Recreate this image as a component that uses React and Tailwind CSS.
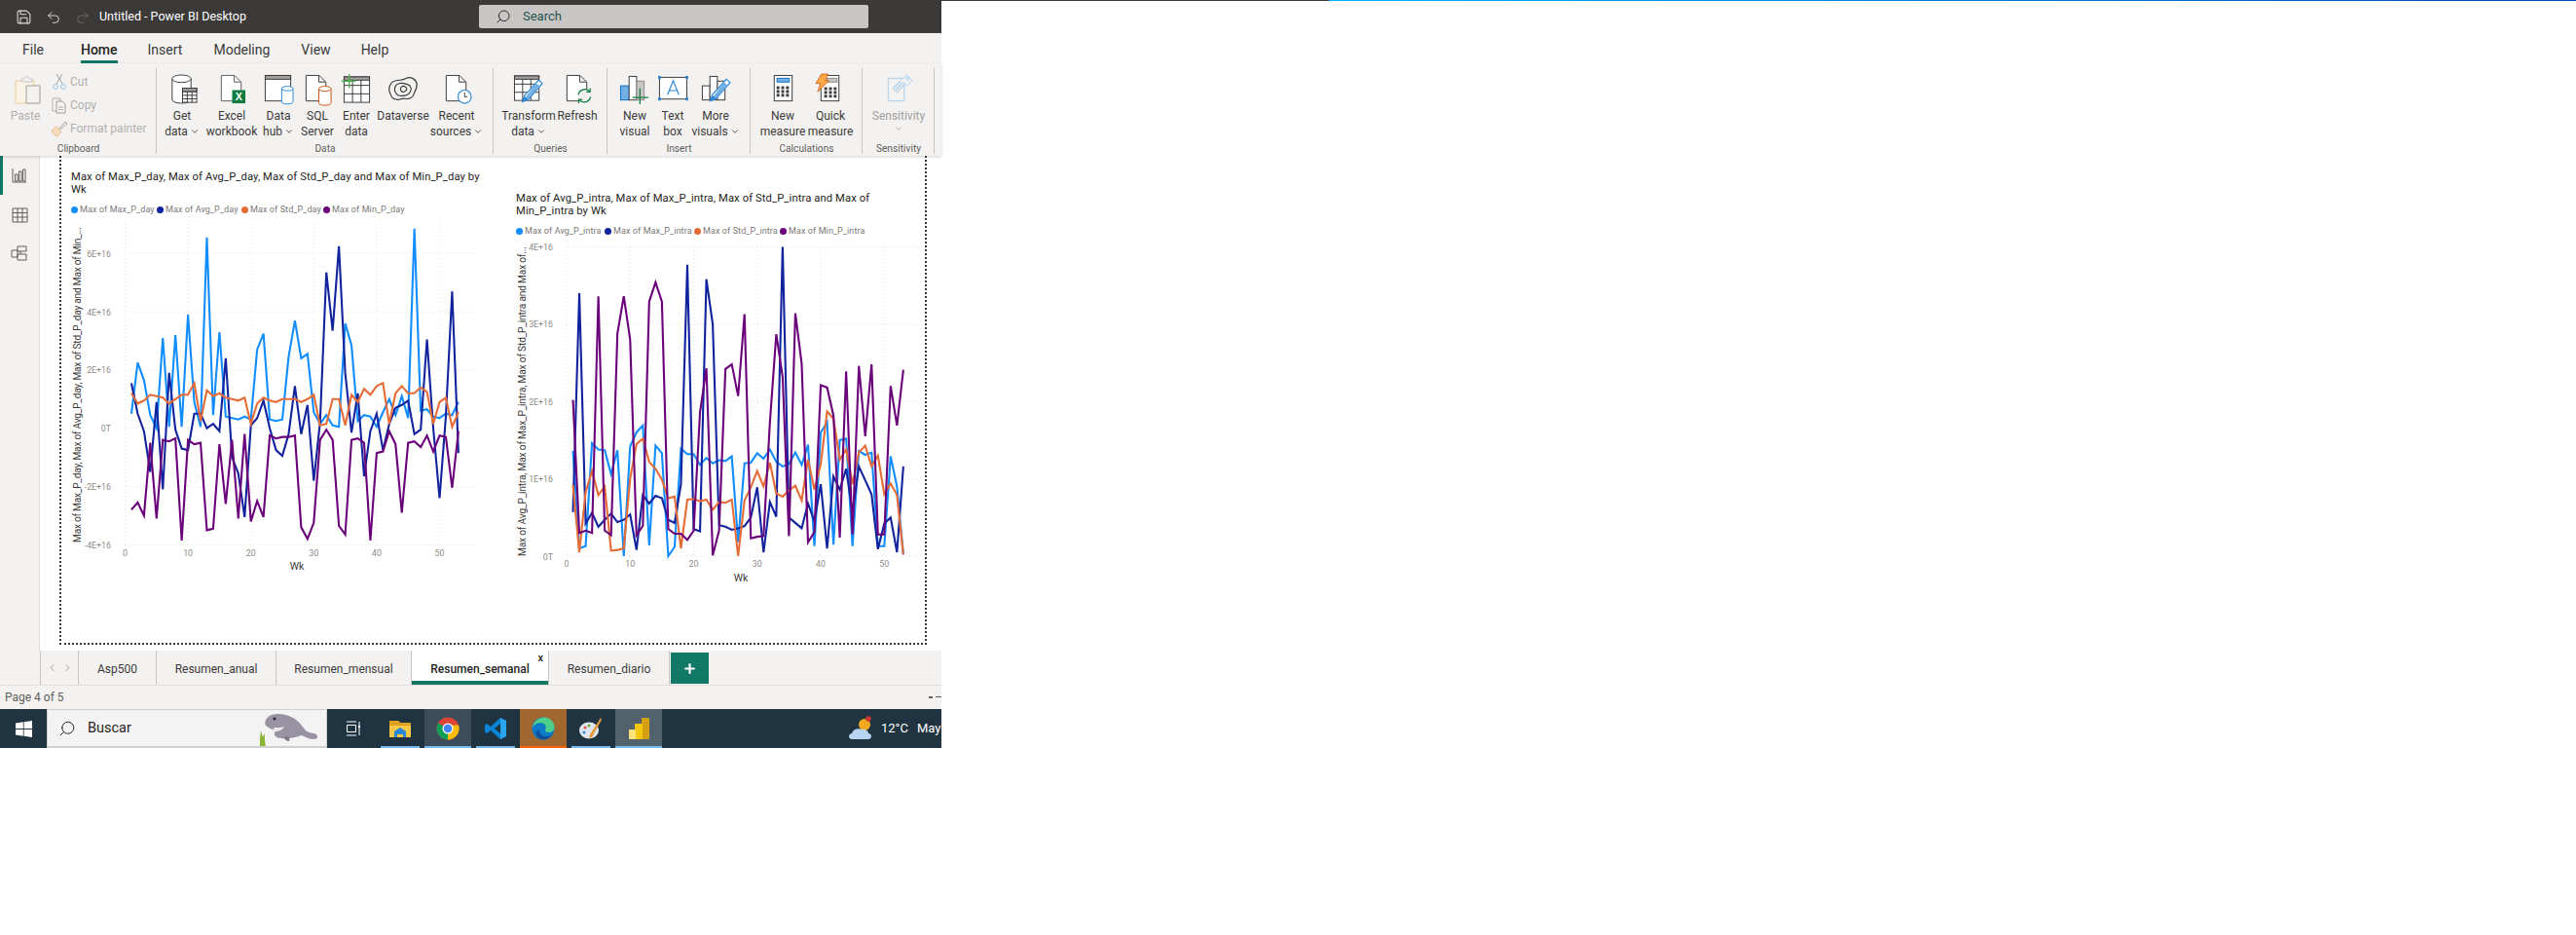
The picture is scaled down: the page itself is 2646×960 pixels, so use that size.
import React from 'react'
import { ChevronDown, ChevronLeft, ChevronRight, Plus, Redo2, Save, Search, Undo2 } from 'lucide-react'

const BLUE = '#118dff'
const NAVY = '#12239e'
const ORANGE = '#e66c37'
const PURPLE = '#6b007b'

// values read off the chart, in units of 1E+16, week 1 to 53
const dayMax = [.5,2.25,1.65,.45,0,3.1,.05,3.2,.05,3.9,.9,.05,6.55,.45,3.3,.4,.35,.3,.4,.3,2.7,3.25,.3,.25,.3,2.45,3.7,2.4,2.55,.55,.15,.45,.1,.05,3.6,2.85,.25,.45,.4,.05,.55,1,.45,1.1,.35,6.85,.6,.65,.4,.35,.5,.45,.9]
const dayAvg = [1.55,.5,-.1,-1.5,.9,-2.1,1.9,-.05,-.7,-.75,.5,.5,0,.15,-.1,2.4,-1,-1.55,-3.05,.1,.35,.95,0,-.75,-.95,-.2,1.45,-.2,.8,-1.8,.2,5.35,3.35,6.25,1.9,-.15,1.2,-1.65,-.1,.5,-.75,.15,.7,.8,.95,-.2,-.05,3.05,0,-2.4,.4,4.7,-.85]
const dayStd = [1.2,.85,.95,1.15,1.1,1.05,.85,1,1.15,1.15,1.55,.25,1.3,1.1,1.2,1.05,1,.95,1.05,.15,.85,1.05,.95,.9,1,1,1,.9,1,1.15,.1,.15,1,1,.1,1.15,.9,1.35,1.15,1.45,1.55,.15,1.2,1.45,1.2,1.2,1.4,1.25,.15,.9,1.05,.05,.55]
const dayMin = [-2.8,-2.55,-3,-.5,-3.1,-.4,-.45,-.35,-3.85,-.4,-.55,-.5,-3.5,-3.45,-.55,-2.6,-.4,-3.1,-.2,-3.2,-2.5,-3.05,-.25,-.35,-.3,-.3,-.25,-3.4,-3.8,-3.25,-.4,-.05,-.4,-3.35,-3.65,-.4,-.35,-.5,-3.85,-.85,-.8,-.1,-.55,-2.9,-.5,-.45,-.65,-.25,-.8,-.25,-.3,-2.05,-.1]

const intraAvg = [1.36,.1,.13,1.46,1.38,1.37,1.06,1.37,0,1.42,1.6,1.69,.14,1.43,1.33,0,.12,1.39,1.32,1.32,1.18,1.27,1.2,1.24,1.23,1.29,.18,1.2,1.21,1.33,1.26,1.38,1.22,1.16,1.19,1.34,1.18,1.44,.13,1.6,1.73,.15,1.5,1.52,.13,1.36,1.31,1.34,.13,.13,1.29,.9,.02]
const intraMax = [.57,3.4,.42,.56,.38,.47,.55,.44,.47,.54,.08,.79,.68,.78,.75,.47,.43,.93,3.77,.35,.32,3.58,3,.4,.38,.34,.36,.39,.5,.89,.05,.7,.51,4,.5,.43,.36,.68,.45,.93,.1,1.03,.86,1.13,.56,1.16,.98,.8,.09,.42,.5,.05,1.16]
const intraStd = [.92,.05,.83,1.1,.79,.9,.07,.08,.1,1,1.45,1.52,1.22,1.13,.99,.75,.77,.1,.73,.74,.71,.73,.6,.7,.69,.73,0,.72,.89,1.1,.9,1.21,.81,.77,.85,.91,.72,1.25,.86,1.19,1.87,1.78,1.25,1.38,.93,1.34,1.43,1.16,1.3,.8,.94,.79,.02]
const intraMin = [2.02,.3,.33,.3,3.36,.33,.27,2.88,3.36,2.8,.27,.39,3.29,3.54,3.29,.35,.29,.29,.21,.33,1.86,2.43,.01,.33,2.42,2.48,2.07,3.13,.23,.25,.26,1.73,2.87,2.32,.26,3.14,2.49,.18,.31,2.21,2.18,1.82,.24,2.39,.28,2.46,1.55,2.48,.28,.28,2.2,1.69,2.41]

const fmtTick = (v) => (v === 0 ? '0T' : `${v}E+16`)

// svg viewBox uses page pixels so the numbers match the reference directly
function LinePlot({ box, x0, xStep, yZero, yUnit, ticks, right, top, axisX, labelX, yTitle, yTitleLen, yTitleStart, wkX, wkY, tickY, series }) {
  const px = (w) => x0 + w * xStep
  const py = (v) => yZero - v * yUnit
  return (
    <svg width={box[2]} height={box[3]} viewBox={box.join(' ')} className="mt-[6px] block">
      {ticks.map((t) => (
        <g key={t}>
          <line x1={x0} x2={right} y1={py(t)} y2={py(t)} stroke="#dedede" strokeDasharray="1 3" />
          <text x={labelX} y={py(t) + 3.5} fontSize="8.8" textAnchor="end" fill="#8d8b89">{fmtTick(t)}</text>
        </g>
      ))}
      {[0, 10, 20, 30, 40, 50].map((w) => (
        <g key={w}>
          <line x1={px(w)} x2={px(w)} y1={top} y2={py(ticks[0])} stroke="#dedede" strokeDasharray="1 3" />
          <text x={px(w)} y={tickY} fontSize="8.8" textAnchor="middle" fill="#8d8b89">{w}</text>
        </g>
      ))}
      <text x={axisX} y={yTitleStart} fontSize="10.2" fill="#3b3a39" textLength={yTitleLen} transform={`rotate(-90 ${axisX} ${yTitleStart})`}>{yTitle}</text>
      <text x={wkX} y={wkY} fontSize="10.5" textAnchor="middle" fill="#3b3a39">Wk</text>
      {series.map((s) => (
        <polyline
          key={s.color}
          points={s.data.map((v, i) => `${px(i + 1)},${py(v)}`).join(' ')}
          fill="none"
          stroke={s.color}
          strokeWidth="2.1"
          strokeLinejoin="miter"
        />
      ))}
    </svg>
  )
}

function LegendItem({ color, label, width }) {
  return (
    <div className="flex shrink-0 items-center gap-[2px]" style={{ width }}>
      <span className="h-[7px] w-[7px] shrink-0 rounded-full" style={{ backgroundColor: color }} />
      <span className="whitespace-nowrap text-[9px] leading-none tracking-[0.1px] text-[#7b7977]">{label}</span>
    </div>
  )
}

/* ---------- ribbon icons ---------- */
const ink = '#3b3a39'

function Cyl({ x, y, w, h, stroke = ink, fill = '#fff' }) {
  const ry = w * 0.2
  return (
    <g fill={fill} stroke={stroke} strokeWidth="1">
      <path d={`M${x} ${y + ry}v${h}c0 ${ry * 1.3} ${w} ${ry * 1.3} ${w} 0v-${h}`} />
      <ellipse cx={x + w / 2} cy={y + ry} rx={w / 2} ry={ry} />
    </g>
  )
}

function Page({ x = 5, y = 1, w = 20, h = 27, stroke = ink }) {
  return <path d={`M${x + .5} ${y + .5}h${w - 7}l7 7v${h - 7}h-${w}z M${x + w - 7} ${y + .5}v7h7`} fill="#fff" stroke={stroke} />
}

function Grid({ x, y, w, h, cols, rows, stroke = ink, head }) {
  const lines = []
  for (let i = 1; i < cols; i++) lines.push(<line key={`c${i}`} x1={x + (w * i) / cols} x2={x + (w * i) / cols} y1={y} y2={y + h} />)
  for (let i = 1; i < rows; i++) lines.push(<line key={`r${i}`} x1={x} x2={x + w} y1={y + (h * i) / rows} y2={y + (h * i) / rows} />)
  return (
    <g stroke={stroke} fill="none">
      <rect x={x} y={y} width={w} height={h} fill="#fff" />
      {lines}
      {head && <rect x={x} y={y} width={w} height="3.5" fill="#a19f9d" stroke={stroke} />}
    </g>
  )
}

function Clock({ cx, cy, r }) {
  return (
    <g>
      <circle cx={cx} cy={cy} r={r} fill="#fff" stroke="#2b88d8" strokeWidth="1.2" />
      <path d={`M${cx} ${cy - r + 2.5}v${r - 2.5}h3`} fill="none" stroke={ink} />
    </g>
  )
}

function Pencil({ dx = 0, dy = 0 }) {
  return (
    <g transform={`translate(${dx} ${dy})`}>
      <path d="M24 1.5l4 3.5L13 22l-6 2.5L9 18z" fill="#fff" stroke="#2b88d8" strokeWidth="1.2" />
      <path d="M21.5 4.5l4 3.5L12 22l-2-2z" fill="#71afe5" />
      <path d="M7 24.5l2-6 4 3.5z" fill="#2b88d8" />
    </g>
  )
}

const icons = {
  getData: (
    <>
      <Cyl x={6} y={1} w={20} h={22} />
      <Grid x={17} y={15} w={15} h={15} cols={3} rows={4} head />
    </>
  ),
  excel: (
    <>
      <Page x={5} y={1} w={21} h={27} stroke="#605e5c" />
      <rect x={17} y={17} width={14} height={14} fill="#107c41" />
      <text x={24} y={28} fontSize="11" fontWeight="700" textAnchor="middle" fill="#fff" fontFamily="Liberation Sans, sans-serif">X</text>
    </>
  ),
  dataHub: (
    <>
      <rect x={2.5} y={1.5} width={27} height={27} fill="#fff" stroke={ink} />
      <rect x={2.5} y={1.5} width={27} height={4} fill="#a19f9d" stroke={ink} />
      <Cyl x={20} y={13} w={12} h={14} stroke="#2b88d8" />
    </>
  ),
  sql: (
    <>
      <Page x={4} y={1} w={21} h={27} />
      <Cyl x={18} y={13} w={13} h={15} stroke="#ca5010" />
    </>
  ),
  enter: (
    <>
      <Grid x={3.5} y={3} w={27} h={27} cols={3} rows={3} head />
      <path d="M9 0v15M1 7.500h15" stroke="#4caf50" strokeWidth="1.4" />
    </>
  ),
  dataverse: (
    <g fill="none" stroke={ink} strokeWidth="1.2">
      <path d="M3 21c-3-6 0-13 6-14 4-1 7 0 10-2 5-3 11 0 12 5 1 5-2 8-3 11-1 4-5 6-9 5-4-1-6 2-9 1-4 0-6-3-7-6z" />
      <path d="M9 20c-3-4-1-9 3-10 3-1 6 0 9 1 4 1 5 5 3 8-2 4-6 4-9 4-2 0-5-1-6-3z" />
      <path d="M14 17c-1-3 2-5 4-4 3 1 3 4 1 5-2 2-4 1-5-1z" />
    </g>
  ),
  recent: (
    <>
      <Page x={5} y={1} w={21} h={27} />
      <Clock cx={25} cy={24} r={7} />
    </>
  ),
  transform: (
    <>
      <Grid x={1.500} y={2} w={26} h={26} cols={3} rows={3} head />
      <Pencil dx={3} dy={5} />
    </>
  ),
  refresh: (
    <>
      <Page x={5} y={1} w={21} h={27} />
      <circle cx={24} cy={23} r={7.5} fill="#f3f2f1" />
      <path d="M17.500 22a7 7 0 0 1 12-3.500M30.500 24a7 7 0 0 1-12 3.500" fill="none" stroke="#107c41" strokeWidth="1.3" />
      <path d="M30 15v4h-4M18 31v-4h4" fill="none" stroke="#107c41" strokeWidth="1.3" />
    </>
  ),
  newVisual: (
    <>
      <rect x={1.500} y={12.500} width={9} height={15} fill="#71afe5" stroke="#0f6cbd" />
      <rect x={10.500} y={2.500} width={8} height={25} fill="#fff" stroke={ink} />
      <rect x={18.500} y={7.500} width={8} height={20} fill="#c8c6c4" stroke="#8a8886" />
      <path d="M22 15v17M14 25h17" stroke="#107c41" strokeWidth="1.300" />
    </>
  ),
  textBox: (
    <>
      <rect x={2.500} y={3.500} width={29} height={23} fill="#fff" stroke={ink} />
      {[[2.500, 3.500], [31.500, 3.500], [2.500, 26.500], [31.500, 26.500]].map(([x, y]) => (
        <rect key={`${x}${y}`} x={x - 1.500} y={y - 1.500} width={3} height={3} fill="#2b88d8" />
      ))}
      <path d="M11 22l6-15 6 15M13 17.500h8" fill="none" stroke="#2b88d8" strokeWidth="1.200" />
    </>
  ),
  moreVisuals: (
    <>
      <rect x={2.500} y={12.500} width={8} height={15} fill="#fff" stroke={ink} />
      <rect x={10.500} y={2.500} width={8} height={25} fill="#fff" stroke={ink} />
      <rect x={18.500} y={7.500} width={8} height={20} fill="#fff" stroke={ink} />
      <Pencil dx={4} dy={4} />
    </>
  ),
  measure: (
    <>
      <rect x={7.500} y={1.500} width={19} height={27} fill="#fff" stroke={ink} />
      <rect x={10.500} y={4.500} width={13} height={4} fill="#71afe5" stroke="#0f6cbd" />
      {[12, 16, 20].flatMap((y) => [10, 15, 20].map((x) => <rect key={`${x}${y}`} x={x} y={y + 1} width={3} height={3} fill={ink} />))}
    </>
  ),
  quick: (
    <>
      <rect x={6.500} y={1.500} width={19} height={27} fill="#fff" stroke={ink} />
      <rect x={12.500} y={4.500} width={11} height={4} fill="#c8c6c4" stroke="#8a8886" />
      {[13, 17, 21].flatMap((y) => [10, 15, 20].map((x) => <rect key={`${x}${y}`} x={x} y={y + 1} width={3} height={3} fill={ink} />))}
      <path d="M7 0h7l-3 7h4L3 19l3-9H1z" fill="#ffaa44" stroke="#ca5010" strokeWidth=".8" />
    </>
  ),
  sensitivity: (
    <g stroke="#a9cfee" fill="none">
      <path d="M5.500 4.500h17v24h-17z" fill="#f3f2f1" />
      <path d="M10 16l9-9M12 18l9-9M14 20l9-9" strokeWidth="1.300" />
      <path d="M20 6l5-5 6 6-5 5-2-1" fill="#f3f2f1" />
      <circle cx={26} cy={5} r={1.500} />
    </g>
  ),
}

function RibbonIcon({ name }) {
  return (
    <svg width="32" height="32" viewBox="0 0 33 33" className="shrink-0 overflow-visible">
      {icons[name]}
    </svg>
  )
}

function RibbonBtn({ icon, lines, width, caret, muted }) {
  return (
    <div className={`flex shrink-0 flex-col items-center pt-[11px] ${muted ? 'text-[#a19f9d]' : 'text-[#3b3a39]'}`} style={{ width }}>
      <RibbonIcon name={icon} />
      <div className="mt-[3px] flex flex-col items-center whitespace-nowrap text-[12px] leading-[16px]">
        <span>{lines[0]}</span>
        <span className="flex items-center gap-[2px]">
          {lines[1]}
          {caret && <ChevronDown size={10} strokeWidth={2} />}
        </span>
      </div>
    </div>
  )
}

function RibbonGroup({ label, width, pad = 0, children }) {
  return (
    <div className="relative flex h-full shrink-0 flex-col" style={{ width }}>
      <div className="flex h-[82px]" style={{ paddingLeft: pad }}>{children}</div>
      <div className="text-center text-[10.2px] leading-[14px] text-[#605e5c]">{label}</div>
      <div className="absolute right-0 top-[5px] h-[88px] w-px bg-[#c8c6c4]" />
    </div>
  )
}

function SmallAction({ icon, label }) {
  return (
    <div className="flex h-[24px] items-center gap-[2px] whitespace-nowrap text-[12px] text-[#b3b0ad]">
      <svg width="18" height="18" viewBox="0 0 18 18" className="shrink-0" fill="none">{icon}</svg>
      {label}
    </div>
  )
}

function RailIcon({ children }) {
  return (
    <div className="flex h-[40px] items-center justify-center">
      <svg width="20" height="20" viewBox="0 0 20 20" fill="none" stroke="#605e5c">{children}</svg>
    </div>
  )
}

function SheetTab({ label, width, active }) {
  return (
    <div className={`relative flex h-full shrink-0 items-center justify-center border-r border-[#c8c6c4] pt-[2px] text-[12px] ${active ? 'bg-white font-medium text-[#252423]' : 'text-[#3b3a39]'}`} style={{ width }}>
      {label}
      {active && (
        <>
          <span className="absolute right-[5px] top-[2px] text-[11px] leading-[12px]">x</span>
          <span className="absolute inset-x-0 bottom-0 h-[4px] bg-[#117865]" />
        </>
      )}
    </div>
  )
}

function TaskTile({ children, active, bar = '#76b9ed', bg }) {
  return (
    <div className="relative flex h-full w-[48px] shrink-0 items-center justify-center" style={{ backgroundColor: bg }}>
      <svg width="24" height="24" viewBox="0 0 24 24">{children}</svg>
      {bar && <span className={`absolute bottom-0 h-[2px] ${active ? 'inset-x-0' : 'inset-x-[4px]'}`} style={{ backgroundColor: bar }} />}
    </div>
  )
}

export default function App() {
  return (
    <div className="h-[960px] w-[2646px] overflow-hidden bg-white" style={{ fontFamily: 'Roboto, sans-serif' }}>
      {/* hairline across the top of the screen */}
      <div className="flex h-px">
        <div className="w-[1365px] bg-[#3b3a39]" />
        <div className="flex-1 bg-gradient-to-r from-[#00b4ff] to-[#0047b0]" />
      </div>

      <div className="flex h-[767px] w-[967px] flex-col bg-[#f3f2f1]">
        {/* title bar */}
        <div className="relative flex h-[33px] shrink-0 items-center bg-[#3b3a39] text-white">
          <Save size={17} strokeWidth={1.5} className="ml-[16px] text-[#e1dfdd]" />
          <Undo2 size={16} strokeWidth={1.4} className="ml-[14px] text-[#e1dfdd]" />
          <Redo2 size={16} strokeWidth={1.4} className="ml-[14px] text-[#6f6d6b]" />
          <span className="ml-[9px] whitespace-nowrap text-[12.5px]">Untitled - Power BI Desktop</span>
          <div className="absolute left-[492px] top-[4px] flex h-[24px] w-[400px] items-center rounded-[2px] bg-[#c8c6c4] pl-[17px] text-[13px] text-[#24544d]">
            <Search size={16} strokeWidth={1.4} className="-scale-x-100 text-[#252423]" />
            <span className="ml-[12px]">Search</span>
          </div>
        </div>

        {/* ribbon tabs */}
        <div className="flex h-[31px] shrink-0 text-[14px] text-[#3b3a39]">
          <span className="ml-[23px] mt-[7px]">File</span>
          <div className="relative ml-[38px] h-full pt-[7px] font-medium text-[#252423]">
            Home
            <span className="absolute inset-x-0 bottom-0 h-[3px] bg-[#117865]" />
          </div>
          <span className="ml-[31px] mt-[7px]">Insert</span>
          <span className="ml-[32px] mt-[7px]">Modeling</span>
          <span className="ml-[32px] mt-[7px]">View</span>
          <span className="ml-[31px] mt-[7px]">Help</span>
        </div>

        {/* ribbon */}
        <div className="relative z-10 flex h-[95px] shrink-0 shadow-[0_1px_3px_rgba(0,0,0,0.18)]">
          <RibbonGroup label="Clipboard" width={161}>
            <div className="flex w-[52px] flex-col items-center pt-[11px] text-[#b3b0ad]">
              <svg width="32" height="32" viewBox="0 0 32 32" fill="none" className="ml-[8px] shrink-0">
                <path d="M2 7h19v23H2z" stroke="#f0d6b2" fill="#fbf3e6" strokeWidth="1.400" />
                <path d="M8 7V5h3c0-3 5-3 5 0h3v3H8z" fill="#f3f2f1" stroke="#c8c6c4" />
                <path d="M13 12h14v18H13z" fill="#f3f2f1" stroke="#a19f9d" />
              </svg>
              <span className="mt-[3px] text-[12px] leading-[16px]">Paste</span>
            </div>
            <div className="flex flex-col pt-[7px]">
              <SmallAction label="Cut" icon={<><path d="M6 1l6 10M12 1L6 11" stroke="#a19f9d" /><circle cx="5" cy="14" r="2.400" stroke="#9ac6ea" /><circle cx="13" cy="14" r="2.400" stroke="#9ac6ea" /></>} />
              <SmallAction label="Copy" icon={<><path d="M2 2h8v3M2 2v13h4" stroke="#b3b0ad" /><path d="M6 5h6l3 3v9H6z" stroke="#a19f9d" /><path d="M8 11h5M8 13.500h5" stroke="#b3b0ad" /></>} />
              <SmallAction label="Format painter" icon={<><path d="M1 11l5-4 5 5-4 5c-3-1-5-3-6-6z" fill="#f5dcbc" stroke="#eac08e" /><path d="M9 9l6-7 2 2-7 6" fill="#f3f2f1" stroke="#a19f9d" /></>} />
            </div>
          </RibbonGroup>
          <RibbonGroup label="Data" width={346}>
            <RibbonBtn icon="getData" lines={['Get', 'data']} width={52} caret />
            <RibbonBtn icon="excel" lines={['Excel', 'workbook']} width={50} />
            <RibbonBtn icon="dataHub" lines={['Data', 'hub']} width={46} caret />
            <RibbonBtn icon="sql" lines={['SQL', 'Server']} width={34} />
            <RibbonBtn icon="enter" lines={['Enter', 'data']} width={46} />
            <RibbonBtn icon="dataverse" lines={['Dataverse', '\u00a0']} width={50} />
            <RibbonBtn icon="recent" lines={['Recent', 'sources']} width={60} caret />
          </RibbonGroup>
          <RibbonGroup label="Queries" width={117} pad={10}>
            <RibbonBtn icon="transform" lines={['Transform', 'data']} width={52} caret />
            <RibbonBtn icon="refresh" lines={['Refresh', '\u00a0']} width={48} />
          </RibbonGroup>
          <RibbonGroup label="Insert" width={147} pad={8}>
            <RibbonBtn icon="newVisual" lines={['New', 'visual']} width={40} />
            <RibbonBtn icon="textBox" lines={['Text', 'box']} width={38} />
            <RibbonBtn icon="moreVisuals" lines={['More', 'visuals']} width={50} caret />
          </RibbonGroup>
          <RibbonGroup label="Calculations" width={115} pad={8}>
            <RibbonBtn icon="measure" lines={['New', 'measure']} width={50} />
            <RibbonBtn icon="quick" lines={['Quick', 'measure']} width={48} />
          </RibbonGroup>
          <RibbonGroup label="Sensitivity" width={74} pad={7}>
            <RibbonBtn icon="sensitivity" lines={['Sensitivity', '']} width={60} caret muted />
          </RibbonGroup>
        </div>

        {/* main area */}
        <div className="flex h-[508px] shrink-0">
          <div className="flex w-[41px] shrink-0 flex-col border-r border-[#e1dfdd]">
            <div className="border-l-[3px] border-[#117865] pr-[3px]">
              <RailIcon><path d="M3 3v14h14" /><path d="M5.500 9h2.500v7H5.500zM9.500 6h2.500v10H9.500zM13.500 4h2.500v12h-2.500z" /></RailIcon>
            </div>
            <RailIcon><path d="M3 4h15v14H3zM3 8.500h15M3 13h15M8 4v14M13 4v14" /></RailIcon>
            <RailIcon><path d="M8 3h9v5H8zM11 8v3M8 11h9v6H8zM2 7h6v7H2z" /></RailIcon>
          </div>
          <div className="flex-1 bg-white pl-[20px]">
            <div className="flex h-[502px] w-[891px] items-start border-2 border-t-0 border-dotted border-[#3b3a39] pl-[10px]">
              {/* left visual */}
              <div className="mt-[15px] w-[457px] shrink-0">
                <div className="w-[425px] text-[11.2px] leading-[13px] tracking-[0.12px] text-[#252423]">
                  Max of Max_P_day, Max of Avg_P_day, Max of Std_P_day and Max of Min_P_day by Wk
                </div>
                <div className="mt-[9px] flex h-[10px]">
                  <LegendItem color={BLUE} label="Max of Max_P_day" width={88} />
                  <LegendItem color={NAVY} label="Max of Avg_P_day" width={87} />
                  <LegendItem color={ORANGE} label="Max of Std_P_day" width={84} />
                  <LegendItem color={PURPLE} label="Max of Min_P_day" width={90} />
                </div>
                <LinePlot
                  box={[73, 226, 425, 364]}
                  x0={128.5}
                  xStep={6.46}
                  yZero={439.7}
                  yUnit={29.9}
                  ticks={[-4, -2, 0, 2, 4, 6]}
                  right={489}
                  top={230}
                  axisX={83}
                  labelX={114}
                  yTitle="Max of Max_P_day, Max of Avg_P_day, Max of Std_P_day and Max of Min_..."
                  yTitleLen={324}
                  yTitleStart={557}
                  wkX={305}
                  wkY={585}
                  tickY={571}
                  series={[
                    { color: BLUE, data: dayMax },
                    { color: NAVY, data: dayAvg },
                    { color: ORANGE, data: dayStd },
                    { color: PURPLE, data: dayMin },
                  ]}
                />
              </div>
              {/* right visual */}
              <div className="mt-[37px] w-[420px] shrink-0">
                <div className="w-[400px] text-[11.2px] leading-[13px] tracking-[0.12px] text-[#252423]">
                  Max of Avg_P_intra, Max of Max_P_intra, Max of Std_P_intra and Max of Min_P_intra by Wk
                </div>
                <div className="mt-[9px] flex h-[10px]">
                  <LegendItem color={BLUE} label="Max of Avg_P_intra" width={91} />
                  <LegendItem color={NAVY} label="Max of Max_P_intra" width={92} />
                  <LegendItem color={ORANGE} label="Max of Std_P_intra" width={88} />
                  <LegendItem color={PURPLE} label="Max of Min_P_intra" width={90} />
                </div>
                <LinePlot
                  box={[530, 248, 418, 356]}
                  x0={582}
                  xStep={6.526}
                  yZero={571}
                  yUnit={79.4}
                  ticks={[0, 1, 2, 3, 4]}
                  right={947}
                  top={253}
                  axisX={540}
                  labelX={568}
                  yTitle="Max of Avg_P_intra, Max of Max_P_intra, Max of Std_P_intra and Max of..."
                  yTitleLen={318}
                  yTitleStart={571}
                  wkX={761}
                  wkY={597}
                  tickY={582}
                  series={[
                    { color: BLUE, data: intraAvg },
                    { color: NAVY, data: intraMax },
                    { color: ORANGE, data: intraStd },
                    { color: PURPLE, data: intraMin },
                  ]}
                />
              </div>
            </div>
          </div>
        </div>

        {/* page tabs */}
        <div className="flex h-[35px] shrink-0 pl-[41px]">
          <div className="flex h-full w-[40px] shrink-0 items-center justify-center gap-[5px] border-x border-[#c8c6c4] text-[#c8c6c4]">
            <ChevronLeft size={11} strokeWidth={3} />
            <ChevronRight size={11} strokeWidth={3} />
          </div>
          <SheetTab label="Asp500" width={80} />
          <SheetTab label="Resumen_anual" width={123} />
          <SheetTab label="Resumen_mensual" width={139} />
          <SheetTab label="Resumen_semanal" width={141} active />
          <SheetTab label="Resumen_diario" width={124} />
          <div className="ml-px mt-[2px] flex h-[32px] w-[39px] shrink-0 items-center justify-center bg-[#117865] text-white">
            <Plus size={15} strokeWidth={3.5} />
          </div>
        </div>

        {/* status bar */}
        <div className="flex h-[25px] shrink-0 items-center justify-between border-t border-[#e1dfdd] pl-[5px] text-[12px] text-[#605e5c]">
          <span>Page 4 of 5</span>
          <span className="flex gap-[3px] pr-0">
            <span className="h-[2px] w-[4px] bg-[#605e5c]" />
            <span className="h-px w-[6px] bg-[#605e5c]" />
          </span>
        </div>

        {/* windows taskbar */}
        <div className="flex h-[40px] shrink-0 items-center overflow-hidden bg-[#1f3341] text-white">
          <div className="flex h-full w-[48px] shrink-0 items-center justify-center">
            <svg width="17" height="17" viewBox="0 0 17 17" fill="#fff">
              <path d="M0 2.400L7.800 1.300v6.800H0zM8.600 1.200L17 0v8.100H8.600zM0 8.900h7.800v6.800L0 14.600zM8.600 8.900H17V17L8.600 15.800z" />
            </svg>
          </div>
          <div className="relative flex h-full w-[288px] shrink-0 items-center overflow-hidden border border-b-2 border-[#cfcfcf] bg-[#f3f3f3] pl-[11px] text-[#252423]">
            <Search size={18} strokeWidth={1.3} className="-scale-x-100" />
            <span className="ml-[12px] text-[14.5px]">Buscar</span>
            {/* manatee bing doodle */}
            <svg width="68" height="38" viewBox="0 0 68 38" className="absolute right-0 top-0">
              <path d="M-2 38c1-4 0-8 0-13l2 4 1-8 2 7 2-4 0 7 1 7z" fill="#8cb437" />
              <path d="M6 10C9 3 22 2 32 7c7 3 11 9 15 14 3 3 8 2 11 4 2 2 1 5-2 5-5 0-9-2-13-4-6 2-14 4-21 3-3 0-5-1-6-2-2-2-1-5 1-6-4 0-8-3-11-5-1-1-1-4 0-6z" fill="#9892a3" />
              <path d="M15 18c3 0 8 0 10-1-1 3-5 5-10 5-2 0-2-3 0-4z" fill="#e8e4ea" />
              <path d="M28 27c2 1 3 3 2 5-2 0-4-1-6-4z" fill="#7e7889" />
              <circle cx="15" cy="9" r="1.500" fill="#2c2a30" />
            </svg>
          </div>
          <div className="flex h-full w-[51px] shrink-0 items-center justify-center pl-[2px]">
            <svg width="16" height="16" viewBox="0 0 16 16" fill="none" stroke="#fff">
              <path d="M1 1h10M1 15h10M1.500 4.500h9v7h-9zM14 1v14" />
              <rect x="13" y="5" width="2" height="2" fill="#fff" stroke="none" />
            </svg>
          </div>
          <TaskTile>
            <path d="M1 4h9l2 2h11v15H1z" fill="#f7c948" />
            <path d="M1 4h9l2 2h11v3H1z" fill="#e0a020" />
            <path d="M6 15l6-4 6 4v6h-3v-3H9v3H6z" fill="#2b88d8" />
          </TaskTile>
          <div className="w-px shrink-0" />
          <TaskTile active bg="#3c4d59">
            <circle cx="12" cy="12" r="11.500" fill="#db4437" />
            <path d="M12 12L2 6.300A11.500 11.500 0 0 0 12 23.500z" fill="#0f9d58" />
            <path d="M12 12l-.1 11.500A11.500 11.500 0 0 0 23 8.500H12z" fill="#fbbc05" />
            <circle cx="12" cy="12" r="5.500" fill="#fff" />
            <circle cx="12" cy="12" r="4.300" fill="#4285f4" />
          </TaskTile>
          <div className="w-px shrink-0" />
          <TaskTile>
            <path d="M17 1l6 3v16l-6 3-10-9-4 3-2-1.500v-7L3 7l4 3z" fill="#0a84d6" />
            <path d="M17 7l-6 5 6 5z" fill="#1f3341" />
            <path d="M17 1l6 3v16l-6 3z" fill="#2aa4ec" />
          </TaskTile>
          <div className="w-px shrink-0" />
          <TaskTile active bg="#a0672f" bar="#f7630c">
            <circle cx="12" cy="12" r="11.500" fill="#0c79c9" />
            <path d="M1 11C2 4 8 .500 13 .500c6 0 10.500 5 10.500 10 0 4-3 5.500-6 5.500-2 0-4-1-3.500-2.500 1-2 1.500-6-3-7C7 5.500 3 7 1 11z" fill="#4fd08a" />
            <path d="M8 14c0 4 4 7 8 6 2 0 4-1 5-2.500-2 5-7 6.500-11 5.500-4-1-6-5-5-7 .5-2 3-3 3-2z" fill="#0b4f96" />
          </TaskTile>
          <div className="w-px shrink-0" />
          <TaskTile>
            <ellipse cx="10" cy="14" rx="10" ry="8.500" fill="#dfe6ee" />
            <circle cx="6" cy="11" r="1.600" fill="#e0584f" />
            <circle cx="10" cy="9" r="1.600" fill="#6cb33f" />
            <circle cx="5" cy="16" r="1.600" fill="#3b8fdb" />
            <path d="M22 1l1 2-10 18-3 1 1-4z" fill="#e39a3b" />
          </TaskTile>
          <div className="w-px shrink-0" />
          <TaskTile active bg="#52626c">
            <rect x="15" y="1" width="8" height="22" rx="1" fill="#d59f12" />
            <rect x="8" y="7" width="8" height="16" rx="1" fill="#f2c811" />
            <rect x="2" y="13" width="7" height="10" rx="1" fill="#fbe27a" />
          </TaskTile>
          <svg width="26" height="26" viewBox="0 0 26 26" className="ml-[191px] shrink-0">
            <circle cx="17" cy="9" r="6" fill="#f0a81e" />
            <circle cx="21" cy="3" r="2.800" fill="#d13438" />
            <path d="M4 24c-4 0-4-6 0-6 1-4 6-6 10-4 3-1 7 1 7 4 4 0 4 6 0 6z" fill="#b7d4f2" />
          </svg>
          <span className="ml-[8px] shrink-0 whitespace-nowrap text-[13px]">12°C</span>
          <span className="ml-[9px] shrink-0 whitespace-nowrap text-[13px]">May</span>
        </div>
      </div>
    </div>
  )
}
